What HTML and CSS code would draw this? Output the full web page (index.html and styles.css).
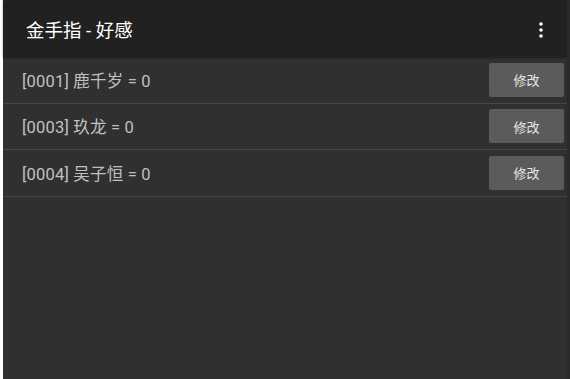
FILE: index.html
```html
<!DOCTYPE html>
<html>
<head>
<meta charset="utf-8">
<link rel="stylesheet" href="styles.css">
</head>
<body>
<div class="edge"></div>
<div class="app">
  <header class="toolbar">
    <span class="title">金手指 - 好感</span>
    <svg class="menu" width="4" height="16" viewBox="0 0 4 16"><circle cx="2" cy="2" r="1.8" fill="#fff"/><circle cx="2" cy="8" r="1.8" fill="#fff"/><circle cx="2" cy="14" r="1.8" fill="#fff"/></svg>
  </header>
  <ul class="list">
    <li class="row"><span class="label">[0001] 鹿千岁 = 0</span><button class="btn">修改</button></li>
    <li class="row"><span class="label">[0003] 玖龙 = 0</span><button class="btn">修改</button></li>
    <li class="row"><span class="label">[0004] 吴子恒 = 0</span><button class="btn">修改</button></li>
  </ul>
</div>
<div class="redge"></div>
</body>
</html>
```
FILE: styles.css
```css
html, body {
  margin: 0;
  padding: 0;
  height: 100%;
  background: #ffffff;
}
body {
  display: flex;
  font-family: Roboto, "Noto Sans CJK SC", sans-serif;
  overflow: hidden;
}
.edge {
  width: 3px;
  flex: none;
  background: #ffffff;
}
.redge {
  width: 3px;
  flex: none;
  background: #2a2a2a;
}
.app {
  flex: 1;
  display: flex;
  flex-direction: column;
  background: #303030;
}
.toolbar {
  height: 57px;
  flex: none;
  background: #212121;
  display: flex;
  align-items: center;
  justify-content: space-between;
  padding: 0 24px 0 23px;
  box-shadow: 0 1px 2px rgba(0,0,0,0.4);
}
.title {
  color: #ffffff;
  font-size: 18.5px;
  font-weight: 400;
}
.menu {
  display: block;
  margin-top: 2px;
}
.list {
  list-style: none;
  margin: 0;
  padding: 0;
}
.row {
  height: 45.5px;
  display: flex;
  align-items: center;
  justify-content: space-between;
  padding: 0 3px 0 19px;
  border-bottom: 1px solid #474747;
}
.label {
  color: #c0c0c0;
  font-size: 16.5px;
  letter-spacing: 0.2px;
}
.btn {
  width: 75px;
  height: 34px;
  border: none;
  border-radius: 2px;
  background: #5b5b5b;
  color: #e8e8e8;
  font-family: "Noto Sans CJK SC", sans-serif;
  font-size: 13px;
  padding: 0;
}
```
